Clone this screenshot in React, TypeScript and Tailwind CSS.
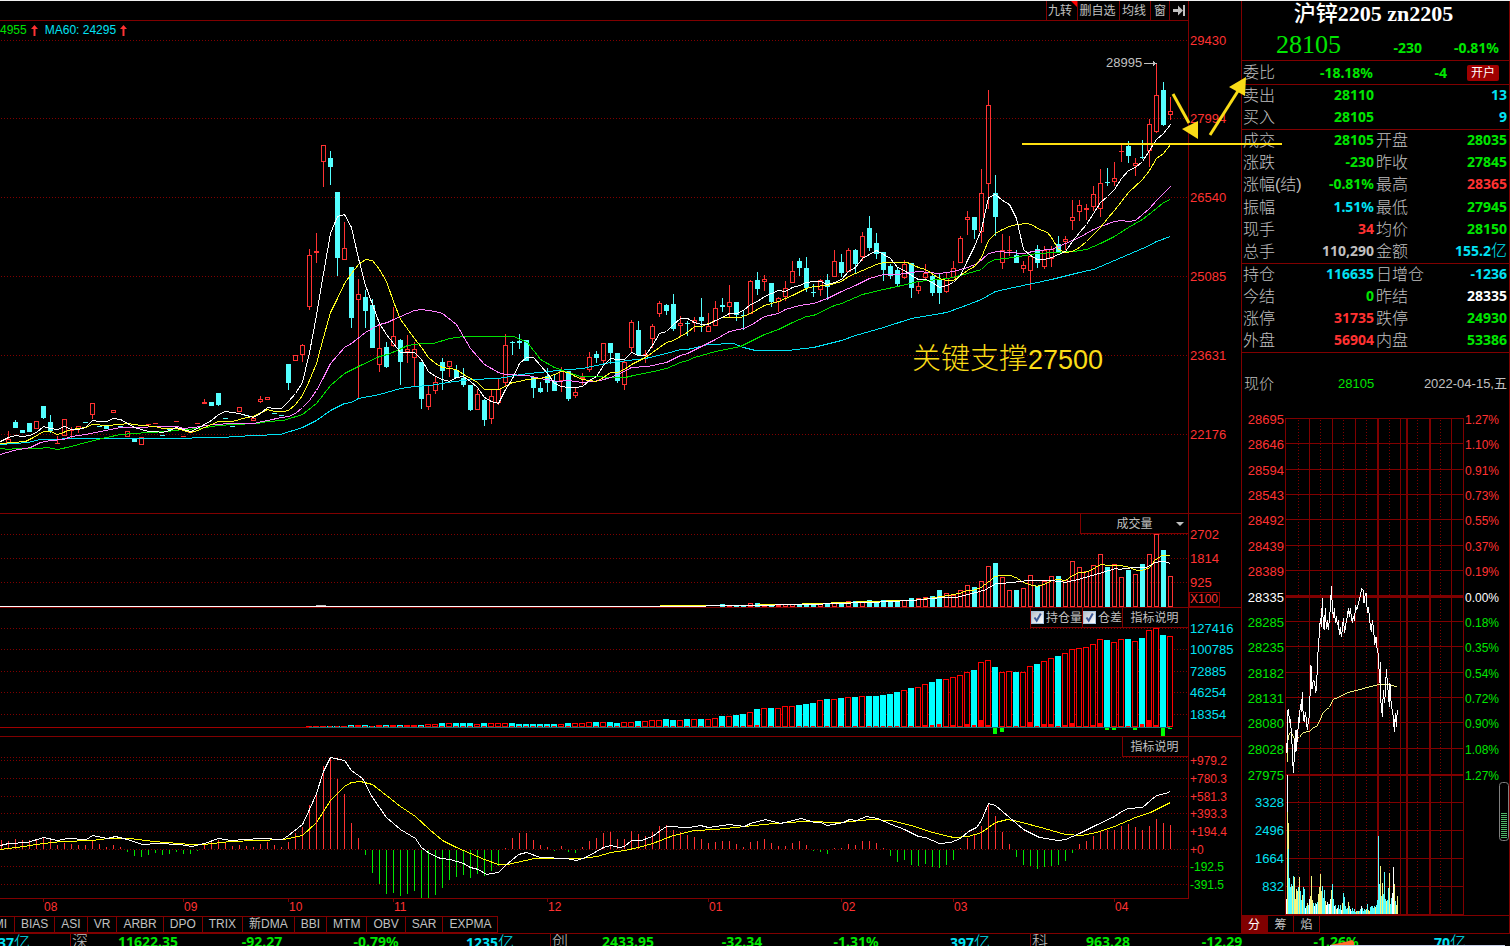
import type { ReactNode } from "react";

const RED = "#ff3232";
const GREEN = "#00e600";
const CYAN = "#02e2f4";
const MAROON = "#800000";
const GRAY = "#c0c0c0";

const CHART_W = 1188;
const STEP = 7;
const FIRST_X = 8;
const cx = (i: number) => FIRST_X + STEP * i;

type Candle = ["r" | "c", number, number, number, number];

// colour, high, body top, body bottom, low
const CANDLES: Candle[] = [
  ["r", 431, 439, 443, 443], ["c", 420, 422, 428, 428], ["c", 430, 430, 433, 433], ["c", 423, 423, 432, 432], ["r", 421, 421, 429, 429],
  ["c", 406, 406, 418, 419], ["c", 415, 422, 431, 433], ["r", 436, 443, 444, 444], ["r", 419, 419, 436, 436], ["r", 427, 430, 431, 439],
  ["r", 426, 426, 429, 433], ["c", 422, 422, 423, 423], ["r", 403, 403, 415, 419], ["c", 426, 426, 427, 427], ["c", 425, 425, 429, 429],
  ["r", 410, 410, 413, 413], ["c", 426, 426, 427, 427], ["r", 431, 431, 437, 437], ["c", 439, 439, 442, 442], ["r", 437, 437, 445, 445],
  ["r", 424, 424, 425, 425], ["r", 423, 423, 424, 424], ["c", 435, 435, 436, 436], ["c", 429, 429, 430, 430], ["r", 421, 421, 422, 422],
  ["r", 436, 436, 437, 437], ["r", 432, 432, 433, 433], ["r", 423, 423, 424, 424], ["r", 399, 402, 404, 404], ["c", 402, 402, 406, 406],
  ["c", 393, 393, 405, 406], ["c", 418, 418, 419, 419], ["c", 426, 426, 427, 427], ["r", 407, 407, 412, 412], ["c", 415, 415, 416, 416],
  ["r", 418, 418, 421, 421], ["r", 396, 399, 402, 403], ["r", 397, 397, 400, 400], ["c", 413, 413, 414, 414], ["c", 415, 415, 416, 416],
  ["c", 364, 364, 383, 390], ["r", 355, 355, 361, 361], ["r", 344, 345, 355, 362], ["r", 249, 255, 307, 310], ["r", 233, 251, 253, 263],
  ["r", 145, 145, 162, 187], ["c", 151, 158, 167, 185], ["c", 192, 192, 258, 276], ["r", 222, 248, 260, 260], ["c", 267, 267, 318, 328],
  ["r", 279, 294, 300, 399], ["c", 290, 297, 311, 328], ["c", 299, 305, 348, 348], ["r", 323, 348, 365, 372], ["c", 342, 347, 367, 368],
  ["r", 307, 336, 346, 347], ["c", 339, 340, 362, 385], ["r", 335, 349, 352, 363], ["r", 342, 349, 358, 386], ["c", 362, 362, 399, 409],
  ["r", 386, 394, 407, 410], ["r", 377, 382, 391, 394], ["c", 358, 362, 371, 390], ["r", 361, 361, 367, 377], ["c", 365, 370, 378, 378],
  ["c", 368, 378, 385, 387], ["c", 385, 385, 410, 411], ["r", 389, 394, 410, 410], ["c", 399, 400, 420, 426], ["r", 390, 396, 419, 424],
  ["r", 379, 389, 403, 405], ["r", 334, 345, 383, 387], ["c", 341, 342, 343, 355], ["c", 334, 341, 343, 349], ["c", 340, 340, 361, 361],
  ["c", 377, 377, 388, 398], ["c", 382, 388, 392, 393], ["c", 368, 376, 383, 392], ["c", 375, 381, 391, 391], ["r", 367, 371, 381, 392],
  ["c", 371, 371, 399, 401], ["r", 388, 392, 396, 398], ["r", 373, 377, 379, 385], ["r", 352, 357, 370, 372], ["c", 351, 354, 358, 363],
  ["r", 343, 343, 361, 363], ["c", 343, 343, 353, 364], ["c", 353, 353, 381, 383], ["r", 359, 362, 385, 390], ["r", 320, 322, 348, 352],
  ["c", 321, 330, 355, 355], ["r", 350, 354, 356, 363], ["r", 324, 326, 339, 348], ["r", 301, 303, 314, 317], ["c", 304, 305, 311, 315],
  ["c", 294, 304, 329, 331], ["r", 316, 323, 326, 336], ["c", 321, 323, 324, 336], ["r", 317, 320, 323, 332], ["c", 298, 317, 321, 332],
  ["r", 313, 326, 332, 332], ["r", 301, 308, 326, 326], ["c", 298, 305, 307, 312], ["r", 285, 302, 307, 317], ["c", 302, 302, 315, 321],
  ["c", 310, 315, 316, 330], ["r", 280, 281, 314, 314], ["c", 272, 280, 289, 295], ["r", 275, 279, 282, 291], ["c", 283, 283, 302, 307],
  ["r", 297, 298, 302, 312], ["r", 281, 288, 297, 301], ["r", 261, 271, 283, 283], ["c", 258, 261, 268, 276], ["c", 257, 268, 288, 292],
  ["c", 284, 292, 293, 297], ["r", 279, 280, 290, 296], ["c", 274, 280, 287, 300], ["r", 250, 261, 277, 277], ["c", 254, 262, 273, 277],
  ["r", 248, 250, 272, 272], ["c", 249, 250, 264, 273], ["r", 232, 236, 257, 261], ["c", 216, 228, 248, 251], ["c", 233, 243, 254, 259],
  ["c", 252, 252, 270, 281], ["c", 264, 266, 276, 279], ["c", 268, 270, 284, 287], ["r", 260, 264, 278, 279], ["c", 263, 263, 288, 298],
  ["r", 281, 286, 291, 294], ["r", 264, 273, 278, 281], ["c", 274, 276, 293, 296], ["c", 273, 279, 293, 304], ["r", 273, 278, 292, 293],
  ["r", 261, 268, 278, 278], ["r", 236, 238, 263, 263], ["r", 211, 217, 220, 235], ["c", 217, 217, 230, 239], ["r", 169, 193, 232, 243],
  ["r", 90, 105, 184, 209], ["c", 175, 193, 217, 236], ["r", 234, 250, 263, 269], ["r", 236, 250, 251, 256], ["c", 250, 255, 263, 263],
  ["r", 261, 265, 269, 273], ["r", 255, 256, 271, 290], ["c", 245, 249, 263, 268], ["r", 246, 250, 267, 269], ["r", 246, 249, 259, 267],
  ["c", 236, 244, 252, 252], ["r", 236, 239, 242, 250], ["r", 200, 217, 221, 230], ["r", 200, 205, 212, 221], ["r", 204, 208, 210, 220],
  ["r", 186, 194, 207, 211], ["r", 169, 183, 209, 217], ["c", 168, 182, 183, 186], ["r", 162, 178, 182, 186], ["r", 145, 151, 152, 162],
  ["c", 141, 146, 156, 163], ["r", 158, 163, 166, 176], ["c", 140, 157, 158, 159], ["r", 119, 124, 151, 167], ["r", 64, 95, 132, 133],
  ["c", 82, 90, 125, 126], ["r", 97, 111, 115, 120],
];

const MA5 = [
  437, 435, 436, 435, 432, 426, 428, 429, 426, 429, 429, 427, 420, 421, 421, 418, 419, 423, 427, 429, 431, 431, 432, 430, 427, 429, 431, 428,
  424, 420, 414, 411, 412, 413, 415, 417, 413, 407, 408, 408, 401, 393, 382, 352, 315, 273, 233, 216, 214, 227, 258, 285, 304, 323, 334, 343,
  352, 352, 352, 359, 371, 376, 379, 381, 377, 376, 381, 387, 397, 401, 403, 389, 378, 363, 357, 357, 365, 373, 383, 386, 387, 387, 386, 380,
  376, 365, 358, 359, 359, 352, 355, 355, 345, 333, 331, 324, 318, 318, 322, 324, 324, 320, 317, 313, 313, 310, 304, 301, 296, 293, 290, 291,
  287, 285, 282, 281, 281, 284, 282, 279, 271, 267, 258, 254, 250, 254, 258, 267, 270, 275, 279, 279, 282, 287, 285, 282, 275, 260, 246, 229,
  197, 194, 200, 204, 218, 249, 255, 259, 259, 257, 254, 251, 241, 232, 224, 213, 202, 196, 189, 178, 170, 167, 161, 150, 139, 133, 124,
];

const MA10 =
  "0,443 13,442 25,441 33,437 43,431 50,431 57,434 71,429 85,427 92,424 106,425 120,424 127,423 141,425 155,426 162,428 176,428 190,432 197,430 211,424 218,421 232,421 246,417 253,416 267,409 274,411 283,411 288,410 295,404 302,395 309,380 316,363 323,337 330,312 337,298 344,283 351,273 358,264 365,259 372,260 379,269 386,281 393,301 400,319 414,338 421,347 428,357 435,363 442,367 456,369 463,374 477,382 484,389 498,389 505,386 512,382 519,381 526,379 537,378 547,377 554,374 561,371 568,372 575,376 582,379 596,381 603,377 610,372 617,372 624,369 631,364 645,357 659,347 666,342 673,340 687,332 694,326 701,326 715,320 722,317 740,317 750,313 764,305 778,301 792,295 806,288 813,286 827,285 841,281 848,276 862,270 876,264 883,262 907,262 918,267 925,269 939,278 946,280 953,280 960,275 967,270 974,266 981,257 988,240 995,233 1002,229 1009,226 1016,224 1027,223 1033,225 1037,228 1047,232 1051,237 1058,249 1065,252 1072,251 1079,247 1086,241 1093,234 1100,227 1107,218 1114,210 1121,201 1128,192 1142,179 1149,170 1156,158 1163,153 1170,144";
const MA20 =
  "0,454 13,450 30,447 40,442 50,440 63,439 71,436 85,434 100,431 120,427 141,427 155,426 177,426 183,428 193,427 213,424 233,423 253,423 267,420 281,417 288,416 295,413 302,407 309,400 316,390 323,377 330,363 344,347 351,343 365,332 379,324 387,322 393,319 407,313 414,310 421,309 435,311 442,313 456,324 470,348 484,364 498,372 505,374 527,375 540,378 557,381 568,380 582,382 600,380 610,377 624,371 631,367 647,366 666,362 680,355 687,353 701,346 715,339 729,331 743,328 750,325 764,316 778,313 785,309 799,305 813,303 827,298 841,291 855,285 869,278 883,274 897,274 918,271 939,273 953,271 967,267 977,263 988,253 997,251 1023,253 1037,250 1051,249 1065,243 1079,237 1093,229 1100,226 1114,221 1121,220 1128,221 1135,220 1142,214 1149,208 1156,200 1170,186";
const MA30 =
  "0,448 8,449 15,448 38,448 47,447 57,449 71,446 85,442 106,437 120,434 133,433 148,432 167,431 183,429 200,428 218,425 233,424 257,423 267,421 283,420 302,414 316,403 330,385 344,373 358,366 379,356 387,354 399,349 407,345 421,343 433,343 449,338 463,336 513,336 527,342 540,359 554,367 568,372 580,376 625,377 633,375 653,371 666,368 680,362 687,360 694,357 715,351 740,346 750,341 764,334 778,329 792,322 806,316 813,315 834,305 841,303 862,294 883,289 897,286 918,281 947,278 960,275 981,269 988,262 995,259 1013,257 1037,253 1073,251 1086,249 1100,243 1114,236 1128,227 1142,219 1156,208 1163,202 1170,199";
const MA60 =
  "0,444 27,442 40,439 83,438 163,438 220,437 253,435 280,434 302,427 316,420 330,410 344,403 351,402 358,398 379,394 400,388 414,386 430,385 447,382 470,379 498,378 520,374 557,370 582,368 610,362 645,358 666,353 680,349 687,349 708,344 733,343 743,347 755,350 787,350 813,347 841,340 855,335 883,327 911,318 946,312 960,307 981,299 995,291 1013,287 1051,279 1079,272 1093,269 1107,263 1128,254 1149,245 1156,241 1170,236";

// bar tops, starting with candle 101
const VOLUME_TOPS = [
  606, 604, 605, 605, 605, 603, 603, 604, 604, 605, 604, 604, 604, 604, 604, 603, 603, 602, 603, 601, 601, 601, 600, 601, 600, 601, 601, 600,
  598, 598, 597, 596, 590, 593, 595, 590, 585, 587, 581, 566, 563, 577, 590, 590, 588, 575, 586, 581, 576, 576, 580, 561, 567, 571, 565, 554,
  567, 564, 577, 570, 574, 564, 554, 534, 550, 576,
];

// open interest bar tops, starting with candle 43
const INTEREST_TOPS = [
  726, 726, 726, 726, 726, 726, 725, 725, 725, 726, 725, 725, 725, 725, 725, 725, 725, 724, 724, 723, 723, 723, 723, 723, 724, 723, 723, 723,
  723, 723, 724, 724, 724, 724, 724, 724, 724, 723, 723, 723, 722, 722, 722, 722, 723, 722, 722, 721, 721, 720, 720, 719, 720, 720, 719, 719,
  719, 719, 718, 716, 716, 715, 714, 712, 709, 708, 708, 708, 706, 706, 705, 704, 703, 700, 699, 699, 698, 697, 697, 696, 696, 696, 695, 694,
  692, 690, 688, 687, 684, 682, 679, 679, 677, 675, 672, 670, 662, 660, 667, 672, 671, 672, 672, 666, 664, 661, 658, 656, 653, 649, 648, 647,
  644, 639, 640, 642, 639, 639, 641, 638, 630, 628, 635, 636,
];
const INTEREST_DELTA: Record<number, number> = {
  106: 2, 107: 2, 131: 2, 132: 2, 133: 3, 135: 2, 137: 3, 138: 2, 139: 7, 140: 2, 141: -6, 142: -4, 146: 5, 148: 3, 149: 3, 151: 2, 152: 4,
  155: 2, 156: 4, 157: -2, 158: -2, 161: -2, 162: 3, 163: 7, 164: 2, 165: -8, 166: -1,
};

// histogram heights, starting one step left of the first candle
const MACD = [
  9, 8, 10, 9, 9, 10, 12, 9, 4, 6, 5, 4, 4, 8, 5, 2, 4, 2, -2, -6, -7, -5, -3, -5, -4, -2, -4, -4, -1, 6, 7, 9, 6, 3, 4, 3, 2, 5, 7, 4, 2, 7, 16,
  22, 44, 54, 83, 90, 70, 55, 26, 11, -5, -23, -34, -44, -43, -46, -44, -41, -48, -49, -45, -38, -30, -27, -25, -28, -24, -26, -21, -16, 1, 11,
  16, 16, 9, 4, 2, -1, 3, -2, -3, 2, 8, 11, 16, 17, 10, 10, 18, 15, 13, 17, 23, 24, 19, 17, 14, 12, 10, 6, 7, 8, 8, 5, 2, 7, 8, 10, 6, 3, 3, 6,
  8, 4, -1, -2, -4, 1, 1, 5, 4, 8, 8, 6, 1, -6, -12, -10, -15, -16, -14, -17, -18, -15, -10, 1, 11, 14, 23, 44, 33, 17, 5, -7, -15, -16, -19,
  -17, -16, -15, -11, -3, 5, 8, 13, 17, 19, 19, 23, 25, 22, 19, 23, 30, 26, 24,
];
const DIF =
  "0,845 8,843 27,842 43,837 57,840 67,838 86,839 92,835 107,838 115,836 127,839 142,844 157,843 180,844 191,846 204,843 218,838 231,840 245,839 260,838 282,839 288,835 302,824 309,809 316,793 323,771 330,757 344,760 351,770 362,778 372,797 386,817 400,829 415,838 421,847 429,853 440,858 450,859 463,863 470,867 478,869 486,874 498,872 505,865 518,854 526,852 540,857 566,858 576,860 585,857 596,851 603,847 610,845 619,847 624,846 631,840 641,840 652,836 660,830 666,826 689,827 700,825 708,827 729,824 744,826 750,823 765,819 780,823 801,818 814,822 820,822 827,825 843,822 849,819 856,820 866,816 877,818 891,824 904,829 918,836 925,837 939,843 950,842 960,838 968,831 976,827 981,820 988,803 995,805 1009,817 1023,829 1039,837 1058,840 1065,839 1079,833 1095,825 1114,816 1121,811 1128,808 1142,807 1150,800 1156,795 1165,793 1170,791";
const DEA =
  "0,849 23,846 43,843 61,841 92,840 107,838 130,838 153,841 191,844 203,844 230,841 283,839 302,835 316,822 323,811 330,800 338,792 344,786 351,782 360,781 372,784 386,795 400,806 415,816 429,829 442,840 456,847 470,853 484,859 498,864 507,864 534,858 580,858 597,856 610,852 624,850 638,847 652,843 660,840 673,835 694,830 715,829 744,826 774,823 803,821 841,822 870,819 890,820 911,825 932,832 953,837 968,836 981,832 995,822 1007,819 1018,821 1044,828 1065,834 1081,835 1096,832 1114,826 1135,817 1150,812 1170,802";

const MONTHS: [string, number][] = [
  ["08", 43], ["09", 183], ["10", 288], ["11", 393], ["12", 547], ["01", 708], ["02", 841], ["03", 953], ["04", 1114],
];

const INTRADAY =
  "319,640 321,670 323,540 326,538 328,578 331,568 334,605 336,640 340,730 343,680 346,600 348,665 350,600 353,635 355,560 358,580 361,522 364,545 367,487 370,570 373,575 376,545 379,570 382,600 385,575 388,560 390,500 393,406 396,478 400,450 404,458 407,488 410,470 412,400 415,350 418,310 421,265 424,290 427,205 430,290 433,300 436,235 439,298 442,270 445,300 448,270 452,225 454,168 457,230 460,265 463,235 466,280 469,258 472,285 475,270 478,315 481,290 484,322 487,300 490,265 494,308 498,280 502,260 505,235 508,260 511,235 514,262 517,280 520,258 523,272 527,225 530,240 535,222 540,200 545,175 549,180 552,220 556,190 559,190 562,250 565,230 570,280 574,305 577,270 581,300 584,345 588,320 592,365 596,370 598,460 601,395 603,520 607,560 610,480 613,520 616,490 619,418 623,470 626,500 628,530 630,460 634,530 638,545 641,575 643,605 646,550 649,590 652,540";
const AVERAGE =
  "321,640 322,695 324,630 328,612 332,606 337,613 342,625 350,622 358,622 370,608 388,604 400,594 412,588 420,570 430,547 448,532 460,508 480,500 500,489 530,481 560,473 600,463 630,464 650,471";
const VOL_MA_A =
  "-120,289 0,287 240,285 411,281 497,277 620,273 700,271 757,264 800,257 841,250 862,241 883,240 904,232 925,216 946,199 970,196 990,196 1010,204 1030,217 1050,224 1072,229 1095,222 1115,212 1135,208 1157,212 1175,198 1195,188 1220,186 1240,177 1262,163 1290,167 1325,167 1345,171 1370,181 1387,181 1408,174 1425,150 1445,137 1470,136";
const VOL_MA_B =
  "-2040,290 0,289 240,286 430,282 600,276 700,271 780,263 830,262 883,249 915,240 946,222 1000,217 1050,211 1110,211 1157,217 1200,207 1262,189 1305,176 1320,178 1365,172 1400,172 1425,158 1450,153 1470,160";

const TICK_VOLUME = [
  15, 139, 91, 36, 27, 30, 28, 38, 37, 15, 25, 23, 27, 37, 23, 14, 19, 27, 25, 6, 8, 11, 9, 15, 18, 38, 14, 11, 8, 11, 10, 12, 20, 27, 40, 23, 28,
  16, 24, 13, 9, 12, 10, 10, 15, 24, 30, 15, 8, 9, 5, 6, 9, 5, 9, 4, 11, 21, 17, 8, 5, 6, 12, 8, 5, 3, 6, 3, 5, 2, 3, 3, 3, 3, 5, 8, 6, 3, 5, 4, 5,
  10, 4, 3, 7, 8, 8, 6, 8, 7, 9, 14, 78, 30, 48, 18, 31, 20, 42, 15, 13, 14, 26, 41, 10, 16, 21, 47, 30, 13, 9, 18,
];
const TICK_COLORS =
  "wwycccycyyyycyccyccwcycwyyycwcwcyyyycccywwcwwyccwcywcccwycccccycwcccccycyccwccccycyycccccyccccycycccyccyccwwycyy";
const tickFill = (n: number) => ({ w: "#ffffff", y: "#f4f480", c: "#54ffff" })[TICK_COLORS[n] ?? "c"] ?? "#54ffff";

/** Chart surface whose drawing keeps to the right edge, so older bars leave on the left. */
function Plot({ top, label, className, children }: { top: number; label: string; className: string; children: ReactNode }) {
  return (
    <svg className={`block w-full ${className}`} role="img" aria-label={label}>
      <svg x="100%" overflow="visible">
        <g transform={`translate(${-CHART_W} ${-top})`} shapeRendering="crispEdges">
          {children}
        </g>
      </svg>
    </svg>
  );
}

function Grid({ rows }: { rows: number[] }) {
  return (
    <>
      {rows.map((y) => (
        <line key={y} x1={1} x2={CHART_W} y1={y + 0.5} y2={y + 0.5} stroke={MAROON} strokeDasharray="1 2" />
      ))}
    </>
  );
}

function Line({ points, color }: { points: string; color: string }) {
  return <polyline points={points} fill="none" stroke={color} strokeWidth={1} transform="translate(0.5 0.5)" />;
}

function Scale({ top, size, className, labels }: { top: number; size: number; className: string; labels: [string, number, string][] }) {
  return (
    <svg className={`block w-[53px] shrink-0 border-l border-[#800000] ${className}`}>
      {labels.map(([t, y, c]) => (
        <text key={t} x={1} y={y - top + 5} fill={c} fontSize={size}>
          {t}
        </text>
      ))}
    </svg>
  );
}

function PriceChart() {
  return (
    <Plot top={21} label="日K线" className="h-[492px]">
      <Grid rows={[40, 118, 197, 276, 355, 434]} />
      {CANDLES.map(([k, h, t, b, l], i) => {
        const x = cx(i);
        if (k === "c")
          return (
            <g key={i} fill="#54ffff">
              <rect x={x} y={h} width={1} height={l - h} />
              <rect x={x - 2} y={t} width={5} height={b - t} />
            </g>
          );
        return (
          <g key={i} fill={RED}>
            <rect x={x} y={h} width={1} height={t - h} />
            <rect x={x} y={b} width={1} height={l - b} />
            {b - t < 3 ? (
              <rect x={x - 2} y={t} width={5} height={b - t} />
            ) : (
              <rect x={x - 1.5} y={t + 0.5} width={4} height={b - t - 1} fill="none" stroke={RED} />
            )}
          </g>
        );
      })}
      <Line points={MA60} color={CYAN} />
      <Line points={MA30} color="#00e000" />
      <Line points={MA20} color="#ff80ff" />
      <Line points={MA10} color="#ffff20" />
      <Line points={`0,441 ${MA5.map((y, i) => `${cx(i)},${y}`).join(" ")}`} color="#ffffff" />
      <text x={1106} y={67} fill={GRAY} fontSize={13}>28995</text>
      <path d="M1144 63.5H1157" stroke={GRAY} />
      <path d="M1153 61l4 2.500-4 2.500z" fill={GRAY} />
    </Plot>
  );
}

function VolumeChart() {
  return (
    <Plot top={514} label="成交量" className="h-[93px]">
      <Grid rows={[534, 558, 582]} />
      {VOLUME_TOPS.map((y, n) => {
        const i = n + 101;
        const x = cx(i);
        return CANDLES[i][0] === "c" ? (
          <rect key={i} x={x - 2} y={y} width={5} height={607 - y} fill="#54ffff" />
        ) : (
          <rect key={i} x={x - 1.5} y={y + 0.5} width={4} height={606 - y} fill="none" stroke={RED} />
        );
      })}
      <path d="M316 605.500h10" stroke={GRAY} />
      <g transform="translate(680 510) scale(0.33333)" fill="none" strokeWidth={3}>
        <polyline points={VOL_MA_A} stroke="#ffff20" />
        <polyline points={VOL_MA_B} stroke="#ffffff" />
      </g>
    </Plot>
  );
}

function InterestChart() {
  return (
    <Plot top={608} label="持仓量" className="h-[128px]">
      <Grid rows={[628, 649, 671, 692, 714]} />
      {INTEREST_TOPS.map((y, n) => {
        const i = n + 43;
        const x = cx(i);
        return CANDLES[i][0] === "c" ? (
          <rect key={i} x={x - 3} y={y} width={6} height={727 - y} fill="#00ffff" />
        ) : (
          <rect key={i} x={x - 2.5} y={y + 0.5} width={5} height={Math.max(727 - y - 1, 1)} fill="#000000" stroke="#ff0000" />
        );
      })}
      {INTEREST_TOPS.map((_, n) => {
        const i = n + 43;
        const d = INTEREST_DELTA[i] ?? 1;
        return d > 0 ? (
          <rect key={i} x={cx(i) - 2} y={727 - d} width={4} height={d} fill="#ff0000" />
        ) : (
          <rect key={i} x={cx(i) - 2} y={728} width={4} height={-d} fill="#00ff00" />
        );
      })}
      <path d="M309 727.500H1170" stroke="#207070" />
      <path d="M0 727.500H309" stroke="#a00000" />
    </Plot>
  );
}

function MacdChart() {
  return (
    <Plot top={737} label="MACD" className="h-[161px]">
      <Grid rows={[757, 760, 778, 796, 813, 831, 849, 866, 884]} />
      {MACD.map((v, n) => {
        const x = cx(n - 1);
        return v > 0 ? (
          <rect key={n} x={x} y={849 - v} width={1} height={v} fill={RED} />
        ) : (
          <rect key={n} x={x} y={850} width={1} height={-v} fill={GREEN} />
        );
      })}
      <Line points={DEA} color="#ffff00" />
      <Line points={DIF} color="#ffffff" />
    </Plot>
  );
}

const TOOLS = ["删自选", "均线"];

function Toolbar() {
  return (
    <div className="flex h-5 w-full justify-end border-b border-[#800000] text-[12px] leading-[21px] text-[#c0c0c0]">
      <button className="relative w-[31px] border-l border-[#800000] pr-1 text-center">
        九转
        <svg className="absolute top-0 right-0 h-1.5 w-1.5" viewBox="0 0 6 6" aria-hidden="true">
          <path d="M0 0h6v6z" fill="#ff0000" />
        </svg>
      </button>
      {TOOLS.map((t) => (
        <button key={t} className={`border-l border-[#800000] pr-0.5 text-center ${t.length > 2 ? "w-[42px]" : "w-[31px]"}`}>
          {t}
        </button>
      ))}
      <button className="w-[19px] border-l border-[#800000] text-center">窗</button>
      <button className="flex w-[19px] items-center justify-center border-l border-[#800000]" aria-label="隐藏侧栏">
        <svg width="13" height="11" viewBox="0 0 13 11" aria-hidden="true">
          <path d="M0 4h5V0.500L10 5.500 5 10.500V7H0z" fill={GRAY} />
          <path d="M10 0h2v11h-2z" fill={GRAY} />
        </svg>
      </button>
    </div>
  );
}

function TickBox({ label, id }: { label: string; id: string }) {
  return (
    <label htmlFor={id} className="flex items-center gap-0.5 border-l border-[#800000]">
      <span className="relative block h-[13px] w-[13px]">
        <input
          id={id}
          type="checkbox"
          defaultChecked
          className="peer block h-[13px] w-[13px] appearance-none border border-[#a8c4e0] bg-[#e8ecf2] bg-linear-to-br from-[#b8c0cc] to-[#ffffff]"
        />
        <svg className="pointer-events-none absolute inset-0 hidden peer-checked:block" viewBox="0 0 13 13" aria-hidden="true">
          <path d="M3.500 6.500l2.200 3.200L9.800 2.500" fill="none" stroke="#3c5a9a" strokeWidth={2} />
        </svg>
      </span>
      {label}
    </label>
  );
}

const INDICATORS = ["BIAS", "ASI", "VR", "ARBR", "DPO", "TRIX", "新DMA", "BBI", "MTM", "OBV", "SAR", "EXPMA"];

function Charts() {
  return (
    <div className="min-w-0 flex-1 overflow-hidden">
      <div className="flex">
        <div className="relative min-w-0 flex-1">
          <Toolbar />
          <PriceChart />
          <div className="absolute top-[21px] left-0 flex items-center text-[12px] leading-[16px]">
            <span className="text-[#00e000]">4955</span>
            <UpArrow />
            <span className="ml-[7px] text-[#02e2f4]">MA60: 24295</span>
            <UpArrow />
          </div>
        </div>
        <Scale
          top={1}
          size={13}
          className="h-[512px]"
          labels={[["29430", 40, RED], ["27994", 118, RED], ["26540", 197, RED], ["25085", 276, RED], ["23631", 355, RED], ["22176", 434, RED]]}
        />
      </div>

      <div className="flex border-t border-[#800000]">
        <div className="relative min-w-0 flex-1">
          <VolumeChart />
          <div className="absolute top-0 right-0 h-5 w-[108px] border-b border-l border-[#800000] bg-black">
            <select
              aria-label="副图指标"
              className="block h-full w-full appearance-none bg-black pt-px text-center text-[12px] text-[#c0c0c0] outline-none"
            >
              <option>成交量</option>
            </select>
            <svg className="pointer-events-none absolute top-2 right-1 h-1 w-2" viewBox="0 0 8 4" aria-hidden="true">
              <path d="M0 0h8L4 4z" fill={GRAY} />
            </svg>
          </div>
        </div>
        <div className="relative h-[93px] w-[53px] shrink-0">
          <Scale top={514} size={13} className="h-[93px]" labels={[["2702", 534, RED], ["1814", 558, RED], ["925", 582, RED]]} />
          <span className="absolute bottom-0 left-px border border-[#800000] pr-px text-[12px] leading-[13px] text-[#ff3232]">X100</span>
        </div>
      </div>

      <div className="flex border-t border-[#800000]">
        <div className="relative min-w-0 flex-1">
          <InterestChart />
          <div className="absolute top-0 right-0 flex h-5 border-b border-[#800000] bg-black text-[12px] text-[#c0c0c0]">
            <TickBox id="interest" label="持仓量" />
            <TickBox id="delta" label="仓差" />
            <button className="w-[66px] border-l border-[#800000] pt-px pr-0.5">指标说明</button>
          </div>
        </div>
        <Scale
          top={608}
          size={13}
          className="h-[128px]"
          labels={[["127416", 628, CYAN], ["100785", 649, CYAN], ["72885", 671, CYAN], ["46254", 692, CYAN], ["18354", 714, CYAN]]}
        />
      </div>

      <div className="flex border-t border-[#800000]">
        <div className="relative min-w-0 flex-1">
          <MacdChart />
          <button className="absolute top-0 right-0 h-5 w-[66px] border-b border-l border-[#800000] bg-black pt-px pr-0.5 text-[12px] text-[#c0c0c0]">
            指标说明
          </button>
        </div>
        <Scale
          top={737}
          size={12}
          className="h-[161px]"
          labels={[
            ["+979.2", 760, RED], ["+780.3", 778, RED], ["+581.3", 796, RED], ["+393.3", 813, RED], ["+194.4", 831, RED], ["+0", 849, RED],
            ["-192.5", 866, GREEN], ["-391.5", 884, GREEN],
          ]}
        />
      </div>

      <div className="mr-[52px] border-t border-[#800000]">
        <svg className="block h-[17px] w-full" role="img" aria-label="月份">
          <svg x="100%" overflow="visible">
            <g transform="translate(-1189 -899)">
              {MONTHS.map(([m, x]) => (
                <g key={m}>
                  <path d={`M${x + 0.5} 899v3`} stroke={MAROON} />
                  <text x={x + 1} y={911} fill={RED} fontSize={12}>{m}</text>
                </g>
              ))}
            </g>
          </svg>
        </svg>
      </div>

      <nav className="flex text-[12px] leading-[15px] text-[#c0c0c0]">
        <button className="flex w-[15px] justify-end overflow-hidden border-y border-r border-[#800000] pr-[7px]">MI</button>
        {INDICATORS.map((t) => (
          <button key={t} className="border-y border-r border-[#800000] px-1.5">{t}</button>
        ))}
      </nav>
    </div>
  );
}

function UpArrow() {
  return (
    <svg className="ml-1 h-[11px] w-[7px]" viewBox="0 0 7 11" aria-hidden="true">
      <path d="M3.500 0L7 4H4.500v7h-2V4H0z" fill={RED} />
    </svg>
  );
}

type Cell = [label: string, value: string, tone: string];

const G = "text-[#00e600]";
const R = "text-[#ff3232]";
const C = "text-[#02e2f4]";
const W = "text-white";
const S = "text-[#c0c0c0]";

const TRADE: [Cell, Cell][] = [
  [["成交", "28105", G], ["开盘", "28035", G]],
  [["涨跌", "-230", G], ["昨收", "27845", G]],
  [["涨幅(结)", "-0.81%", G], ["最高", "28365", R]],
  [["振幅", "1.51%", C], ["最低", "27945", G]],
  [["现手", "34", R], ["均价", "28150", G]],
  [["总手", "110,290", S], ["金额", "155.2亿", C]],
];
const HOLDING: [Cell, Cell][] = [
  [["持仓", "116635", C], ["日增仓", "-1236", C]],
  [["今结", "0", G], ["昨结", "28335", W]],
  [["涨停", "31735", R], ["跌停", "24930", G]],
  [["外盘", "56904", R], ["内盘", "53386", G]],
];

const NUM = "font-['Noto_Sans','Noto_Sans_CJK_SC',sans-serif] text-[14px] font-bold";

function Value({ text, tone }: { text: string; tone: string }) {
  const yi = text.endsWith("亿");
  return (
    <span className={`${NUM} ${tone}`}>
      {yi ? text.slice(0, -1) : text}
      {yi && <span className="text-[16px] font-light">亿</span>}
    </span>
  );
}

function Pairs({ rows, className }: { rows: [Cell, Cell][]; className: string }) {
  return (
    <dl className={`flex flex-col border-b border-[#800000] ${className}`}>
      {rows.map((row) => (
        <div key={row[0][0]} className="flex min-h-0 flex-1 items-center gap-0.5 pr-0.5 pl-px text-[16px] leading-[22px]">
          {row.map(([label, value, tone], n) => (
            <div key={label} className={`flex items-center justify-between ${n === 0 ? "w-[131px]" : "min-w-0 flex-1"}`}>
              <dt className="font-light">{label}</dt>
              <dd className="flex pb-0.5 leading-[20px]"><Value text={value} tone={tone} /></dd>
            </div>
          ))}
        </div>
      ))}
    </dl>
  );
}

const SOLID_X: [number, number][] = [
  [1285, 1], [1309, 1], [1332, 1], [1355, 1], [1377, 2], [1400, 1], [1406, 2], [1429, 2], [1451, 1], [1463, 1],
];
const DOTTED_X = [1298, 1320, 1343, 1366, 1389, 1417, 1440];
const LEVELS: [number, string, string, string][] = [
  [418, "28695", "1.27%", RED], [443, "28646", "1.10%", RED], [469, "28594", "0.91%", RED], [494, "28543", "0.73%", RED],
  [519, "28492", "0.55%", RED], [545, "28439", "0.37%", RED], [570, "28389", "0.19%", RED], [596, "28335", "0.00%", "#ffffff"],
  [621, "28285", "0.18%", GREEN], [646, "28235", "0.35%", GREEN], [672, "28182", "0.54%", GREEN], [697, "28131", "0.72%", GREEN],
  [722, "28080", "0.90%", GREEN], [748, "28028", "1.08%", GREEN], [774, "27975", "1.27%", GREEN],
];
const VOLUME_LEVELS: [number, string][] = [[802, "3328"], [830, "2496"], [858, "1664"], [886, "832"], [914, ""]];

function IntradayChart() {
  return (
    <svg className="block h-[506px] w-[267px]" viewBox="1242 409 267 506" role="img" aria-label="分时走势">
      <g shapeRendering="crispEdges">
        {SOLID_X.map(([x, w]) => (
          <rect key={x} x={x} y={418} width={w} height={497} fill={MAROON} />
        ))}
        {DOTTED_X.map((x) => (
          <line key={x} x1={x + 0.5} x2={x + 0.5} y1={420} y2={914} stroke={MAROON} strokeDasharray="1 2" />
        ))}
        {LEVELS.map(([y]) => (
          <rect key={y} x={1285} y={y === 596 ? 595 : y} width={179} height={y === 596 ? 3 : y === 774 ? 2 : 1} fill={MAROON} />
        ))}
        {VOLUME_LEVELS.map(([y]) => (
          <rect key={y} x={1285} y={y} width={179} height={1} fill={MAROON} />
        ))}
        {TICK_VOLUME.map((v, n) => (
          <rect key={n} x={1286 + n} y={914 - v} width={1} height={v} fill={tickFill(n)} />
        ))}
        <rect x={1287} y={812} width={1} height={102} fill="#f4f480" />
        <rect x={1288} y={849} width={1} height={65} fill="#54ffff" />
        <g transform="translate(1180 530) scale(0.33333)" fill="none" strokeWidth={3}>
          <polyline points={AVERAGE} stroke="#f4f480" />
          <polyline points={INTRADAY} stroke="#ffffff" />
        </g>
      </g>
      <g>
        {LEVELS.map(([y, price, pct, c]) => (
          <g key={y} fill={c}>
            <text x={1284} y={y + 6} textAnchor="end" fontSize={13}>{price}</text>
            <text x={1465} y={y + 6} fontSize={12}>{pct}</text>
          </g>
        ))}
        {VOLUME_LEVELS.filter(([, t]) => t).map(([y, t]) => (
          <text key={y} x={1284} y={y + 5} fill={CYAN} textAnchor="end" fontSize={13}>{t}</text>
        ))}
      </g>
      <rect x={1499.5} y={782.5} width={9} height={58} rx={3} fill="#000000" stroke="#808080" />
      {Array.from({ length: 13 }, (_, n) => (
        <rect key={n} x={1501} y={813 + n * 2} width={6} height={1} fill="#50b868" />
      ))}
    </svg>
  );
}

function QuotePanel() {
  return (
    <aside className="w-[269px] shrink-0 border-x border-[#800000] text-[#c0c0c0]">
      <header className="h-[60px] border-b border-[#800000]">
        <h1 className="pr-1 text-center font-['Liberation_Serif','Noto_Sans_CJK_SC',serif] text-[22px] leading-[26px] font-bold text-white">
          <span className="font-medium">沪锌</span>2205 zn2205
        </h1>
        <div className="flex items-baseline leading-[36px] text-[#00e600]">
          <span className="ml-[34px] font-['Liberation_Serif',serif] text-[26px]">28105</span>
          <span className={`ml-auto ${NUM}`}>-230</span>
          <span className={`mr-2.5 ml-8 ${NUM}`}>-0.81%</span>
        </div>
      </header>
      <div className="flex h-6 items-center border-b border-[#800000] pr-2.5 pl-px text-[16px] leading-[22px]">
        <span className="font-light">委比</span>
        <span className={`ml-auto ${NUM} ${G}`}>-18.18%</span>
        <span className={`w-[74px] text-right ${NUM} ${G}`}>-4</span>
        <button className="ml-5 h-4 w-8 rounded-xs bg-[#a00000] text-[12px] leading-[16px] text-white">开户</button>
      </div>
      <Pairs rows={[[["卖出", "28110", G], ["", "13", C]], [["买入", "28105", G], ["", "9", C]]]} className="h-[45px]" />
      <Pairs rows={TRADE} className="h-[134px]" />
      <Pairs rows={HOLDING} className="h-[89px]" />
      <div className="flex h-14 items-center pt-1.5 pr-0.5 pl-0.5">
        <span className="text-[15px] font-light">现价</span>
        <span className="ml-16 text-[13px] text-[#00e600]">28105</span>
        <span className="ml-auto text-[13px]">2022-04-15,五</span>
      </div>
      <IntradayChart />
      <div className="flex h-[18px] border-t border-[#800000] text-[12px] leading-[18px]" role="tablist">
        <button role="tab" aria-selected="true" className="w-[26px] bg-[#800000] pr-0.5 text-white">分</button>
        <button role="tab" aria-selected="false" className="w-[26px] border-r border-b border-[#800000]">筹</button>
        <button role="tab" aria-selected="false" className="w-[26px] border-r border-b border-[#800000]">焰</button>
      </div>
    </aside>
  );
}

const MARKETS: [string, string[]][] = [
  ["深", ["11622.35", "-92.27", "-0.79%", "1235亿"]],
  ["创", ["2433.95", "-32.34", "-1.31%", "397亿"]],
  ["科", ["963.28", "-12.29", "-1.26%", "70亿"]],
];

function Ticker() {
  return (
    <footer className="relative flex h-[13px] justify-end overflow-hidden border-t border-[#800000] leading-[16px]">
      <div className="mr-0.5 w-[114px] shrink-0 pl-1.5 text-center"><Value text="37亿" tone={C} /></div>
      {MARKETS.map(([name, values]) => (
        <div key={name} className="flex w-[480px] shrink-0 border-l border-[#800000]">
          <span className="w-[20px] pl-px text-[16px] font-light text-[#c0c0c0]">{name}</span>
          {values.map((v) => (
            <span key={v} className="w-[114px] text-center"><Value text={v} tone={v.endsWith("亿") ? C : G} /></span>
          ))}
        </div>
      ))}
      <svg className="absolute right-0 bottom-0 h-[6px] w-[180px]" viewBox="0 0 180 6" aria-hidden="true">
        <path d="M0 5h175v1H0z" fill="#c8d0e8" />
        <path d="M0 5L17 1.500 22 0 24 2v3z" fill="#ff6a2a" />
      </svg>
    </footer>
  );
}

function Annotations() {
  return (
    <svg className="pointer-events-none absolute top-0 right-0 h-[400px] w-[610px]" viewBox="900 1 610 400" aria-hidden="true">
      <g stroke="#f9dc17" strokeWidth={3} fill="#f9dc17">
        <path d="M1173 94L1189 123" />
        <path d="M1210 135L1238 91" />
      </g>
      <path d="M1022 143h260v2h-260z" fill="#ffe010" />
      <path d="M1198 139L1182 129 1198 121zM1246 77L1229 87 1245 96z" fill="#f9dc17" />
      <text x={912} y={369} fill="#f9dc17">
        <tspan fontSize={29} fontWeight={300}>关键支撑</tspan>
        <tspan fontSize={27}>27500</tspan>
      </text>
    </svg>
  );
}

export default function App() {
  return (
    <div className="relative overflow-hidden border-t border-[#f0f0f0] bg-black font-['Liberation_Sans','Noto_Sans_CJK_SC',sans-serif]">
      <main className="flex">
        <Charts />
        <QuotePanel />
      </main>
      <Ticker />
      <Annotations />
    </div>
  );
}
